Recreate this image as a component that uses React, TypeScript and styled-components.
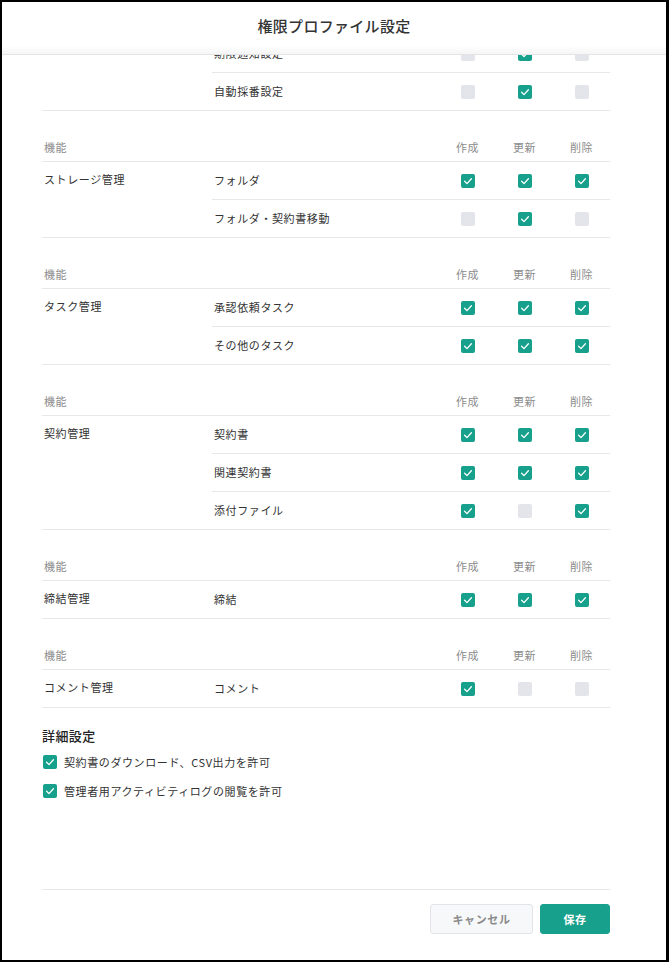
import { useLayoutEffect, useRef } from 'react';
import styled, { createGlobalStyle } from 'styled-components';

type Perm = [string, boolean[]];

type SectionType = {
  label: string;
  rows: Perm[];
};

const sections: SectionType[] = [
  {
    label: '各種設定',
    rows: [
      ['アラート設定', [false, true, false]],
      ['期限通知設定', [false, true, false]],
      ['自動採番設定', [false, true, false]],
    ],
  },
  {
    label: 'ストレージ管理',
    rows: [
      ['フォルダ', [true, true, true]],
      ['フォルダ・契約書移動', [false, true, false]],
    ],
  },
  {
    label: 'タスク管理',
    rows: [
      ['承認依頼タスク', [true, true, true]],
      ['その他のタスク', [true, true, true]],
    ],
  },
  {
    label: '契約管理',
    rows: [
      ['契約書', [true, true, true]],
      ['関連契約書', [true, true, true]],
      ['添付ファイル', [true, false, true]],
    ],
  },
  {
    label: '締結管理',
    rows: [['締結', [true, true, true]]],
  },
  {
    label: 'コメント管理',
    rows: [['コメント', [true, false, false]]],
  },
];

const details = [
  '契約書のダウンロード、CSV出力を許可',
  '管理者用アクティビティログの閲覧を許可',
];

const Check = ({ checked }: { checked: boolean }) => (
  <Box $checked={checked}>
    {checked && (
      <svg width="14" height="14" viewBox="0 0 14 14">
        <polyline
          points="3.6,7.3 6,9.6 10.4,4.8"
          fill="none"
          stroke="#fff"
          strokeWidth="1.3"
          strokeLinecap="round"
          strokeLinejoin="round"
        />
      </svg>
    )}
  </Box>
);

const PermissionSection = ({ label, rows }: SectionType) => (
  <Section>
    <HeadRow>
      <HeadCell>機能</HeadCell>
      <HeadCell />
      <HeadCell $center>作成</HeadCell>
      <HeadCell $center>更新</HeadCell>
      <HeadCell $center>削除</HeadCell>
    </HeadRow>
    <Body>
      <GroupLabel>{label}</GroupLabel>
      <div>
        {rows.map(([name, values]) => (
          <SubRow key={name}>
            <SubName>{name}</SubName>
            {values.map((v, i) => (
              <CheckCell key={i}>
                <Check checked={v} />
              </CheckCell>
            ))}
          </SubRow>
        ))}
      </div>
    </Body>
  </Section>
);

export default function App() {
  const scrollRef = useRef<HTMLDivElement>(null);

  useLayoutEffect(() => {
    const el = scrollRef.current;
    if (el) el.scrollTop = el.scrollHeight;
  }, []);

  return (
    <>
      <GlobalStyle />
      <Modal>
        <Header>
          <Title>権限プロファイル設定</Title>
        </Header>
        <Scroll ref={scrollRef}>
          {sections.map((s) => (
            <PermissionSection key={s.label} {...s} />
          ))}
          <Detail>
            <DetailTitle>詳細設定</DetailTitle>
            <DetailList>
              {details.map((d) => (
                <DetailItem key={d}>
                  <Check checked />
                  <span>{d}</span>
                </DetailItem>
              ))}
            </DetailList>
          </Detail>
        </Scroll>
        <Footer>
          <Buttons>
            <CancelButton>キャンセル</CancelButton>
            <SaveButton>保存</SaveButton>
          </Buttons>
        </Footer>
      </Modal>
    </>
  );
}

const GlobalStyle = createGlobalStyle`
  html, body {
    margin: 0;
    padding: 0;
    background: #fff;
  }
  body {
    font-family: "Noto Sans CJK JP", "Noto Sans", sans-serif;
    color: #333;
  }
`;

const Modal = styled.div`
  width: 669px;
  height: 962px;
  box-sizing: border-box;
  border-style: solid;
  border-color: #000;
  border-width: 2px 3px 2px 2px;
  background: #fff;
  display: flex;
  flex-direction: column;
`;

const Header = styled.div`
  flex: none;
  height: 53px;
  display: flex;
  align-items: center;
  justify-content: center;
  border-bottom: 1px solid #e3e4e6;
  background: linear-gradient(to bottom, #fff 84%, #f5f5f5);
  padding-bottom: 5px;
  box-sizing: border-box;
`;

const Title = styled.h1`
  margin: 0;
  font-size: 15px;
  font-weight: 500;
  letter-spacing: 0.3px;
  color: #333;
`;

const Scroll = styled.div`
  flex: 1;
  overflow: hidden;
  padding: 0 56px 86px 40px;
`;

const Section = styled.div`
  margin-top: 23px;
  border-bottom: 1px solid #e6e8eb;
`;

const HeadRow = styled.div`
  display: grid;
  grid-template-columns: 170px 227px repeat(3, 57px);
  height: 28px;
  align-items: center;
  padding-bottom: 2px;
  box-sizing: border-box;
  border-bottom: 1px solid #e6e8eb;
`;

const HeadCell = styled.div<{ $center?: boolean }>`
  font-size: 11px;
  letter-spacing: 0.6px;
  color: #8c8c8c;
  padding-left: ${(p) => (p.$center ? '0' : '2px')};
  text-align: ${(p) => (p.$center ? 'center' : 'left')};
`;

const Body = styled.div`
  display: grid;
  grid-template-columns: 170px 1fr;
`;

const GroupLabel = styled.div`
  font-size: 11px;
  letter-spacing: 0.6px;
  line-height: 35px;
  padding-left: 2px;
`;

const SubRow = styled.div`
  display: grid;
  grid-template-columns: 227px repeat(3, 57px);
  height: 37px;
  align-items: center;
  & + & {
    border-top: 1px solid #e6e8eb;
  }
`;

const SubName = styled.div`
  font-size: 11px;
  letter-spacing: 0.6px;
  padding-left: 2px;
  padding-bottom: 2px;
`;

const CheckCell = styled.div`
  display: flex;
  justify-content: center;
`;

const Box = styled.span<{ $checked: boolean }>`
  display: inline-flex;
  flex: none;
  width: 14px;
  height: 14px;
  border-radius: 2px;
  background: ${(p) => (p.$checked ? '#17a08b' : '#e3e5ea')};
`;

const Detail = styled.div`
  margin-top: 18px;
`;

const DetailTitle = styled.h2`
  margin: 0;
  font-size: 13px;
  line-height: 20px;
  font-weight: 500;
  letter-spacing: 0.4px;
  color: #222;
`;

const DetailList = styled.div`
  display: flex;
  flex-direction: column;
  gap: 5px;
  margin-top: 4px;
`;

const DetailItem = styled.label`
  display: flex;
  align-items: center;
  gap: 7px;
  height: 24px;
  padding-left: 1px;
  font-size: 11px;
  letter-spacing: 0.6px;
`;

const Footer = styled.div`
  flex: none;
  margin: 0 56px 0 40px;
  border-top: 1px solid #e6e8eb;
  padding: 14px 0 26px;
`;

const Buttons = styled.div`
  display: flex;
  justify-content: flex-end;
  gap: 7px;
`;

const BaseButton = styled.button`
  height: 30px;
  border-radius: 3px;
  font-family: inherit;
  font-size: 11px;
  font-weight: 700;
  letter-spacing: 0.6px;
  cursor: pointer;
`;

const CancelButton = styled(BaseButton)`
  width: 103px;
  background: #f7f8fa;
  border: 1px solid #e2e4e8;
  color: #8a8a8a;
`;

const SaveButton = styled(BaseButton)`
  width: 70px;
  background: #17a08b;
  border: 1px solid #17a08b;
  color: #fff;
`;
